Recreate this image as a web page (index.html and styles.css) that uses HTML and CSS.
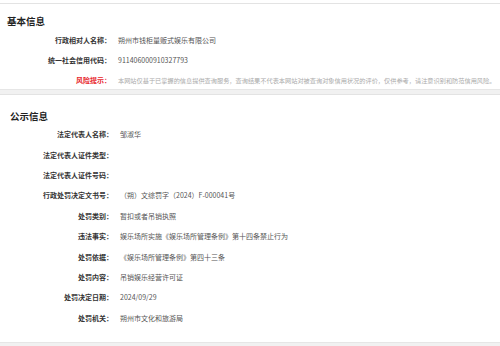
FILE: index.html
```html
<!DOCTYPE html>
<html lang="zh-CN">
<head>
  <meta charset="UTF-8" />
  <meta name="viewport" content="width=device-width, initial-scale=1" />
  <title>行政处罚信息</title>
  <link rel="stylesheet" href="styles.css">
</head>
<body>
  <div class="page">
    <div class="card card-basic">
      <h2 class="card-title">基本信息</h2>
      <div class="row">
        <span class="label">行政相对人名称：</span>
        <span class="value">朔州市钱柜量贩式娱乐有限公司</span>
      </div>
      <div class="row">
        <span class="label">统一社会信用代码：</span>
        <span class="value">911406000910327793</span>
      </div>
      <div class="row">
        <span class="label label-risk">风险提示：</span>
        <span class="value value-risk">本网站仅基于已掌握的信息提供查询服务，查询结果不代表本网站对被查询对象信用状况的评价，仅供参考，请注意识别和防范信用风险。</span>
      </div>
    </div>

    <div class="card card-public">
      <h2 class="card-title">公示信息</h2>
      <div class="row">
        <span class="label">法定代表人名称：</span>
        <span class="value">邹淑华</span>
      </div>
      <div class="row">
        <span class="label">法定代表人证件类型：</span>
        <span class="value"></span>
      </div>
      <div class="row">
        <span class="label">法定代表人证件号码：</span>
        <span class="value"></span>
      </div>
      <div class="row">
        <span class="label">行政处罚决定文书号：</span>
        <span class="value">（朔）文综罚字（2024）F-000041号</span>
      </div>
      <div class="row">
        <span class="label">处罚类别：</span>
        <span class="value">暂扣或者吊销执照</span>
      </div>
      <div class="row">
        <span class="label">违法事实：</span>
        <span class="value">娱乐场所实施《娱乐场所管理条例》第十四条禁止行为</span>
      </div>
      <div class="row">
        <span class="label">处罚依据：</span>
        <span class="value">《娱乐场所管理条例》第四十三条</span>
      </div>
      <div class="row">
        <span class="label">处罚内容：</span>
        <span class="value">吊销娱乐经营许可证</span>
      </div>
      <div class="row">
        <span class="label">处罚决定日期：</span>
        <span class="value">2024/09/29</span>
      </div>
      <div class="row">
        <span class="label">处罚机关：</span>
        <span class="value">朔州市文化和旅游局</span>
      </div>
    </div>
  </div>
</body>
</html>
```

FILE: styles.css
```css
body {
  margin: 0;
  padding-top: 3px;
  background: #fff;
  font-family: "Noto Sans CJK SC", "Noto Sans", sans-serif;
  color: #333;
}
.page {
  display: flex;
  flex-direction: column;
  gap: 4px;
  background: #f1f1f1;
  padding-bottom: 5px;
}
.card {
  background: #fff;
  border-top: 1px solid #e3e3e3;
  border-bottom: 1px solid #e6e6e6;
}
.card-basic {
  padding: 9px 0 0 7px;
  height: 76px;
}
.card-public {
  padding: 13px 0 14px 10px;
}
.card-title {
  margin: 0;
  font-size: 9.5px;
  line-height: 17px;
  font-weight: bold;
  color: #222;
}
.card-public .card-title {
  line-height: 16px;
  margin-bottom: 0;
}
.row {
  display: flex;
  align-items: center;
  height: 20px;
  font-size: 7px;
  white-space: nowrap;
}
.card-public .row {
  height: 20.4px;
}
.label {
  width: 104px;
  text-align: right;
  font-weight: bold;
  color: #333;
}
.card-public .label {
  width: 103px;
}
.value {
  padding-left: 7px;
  color: #555;
}
.label-risk {
  color: #e8262b;
}
.value-risk {
  font-size: 6.2px;
  color: #aaa;
}
```
